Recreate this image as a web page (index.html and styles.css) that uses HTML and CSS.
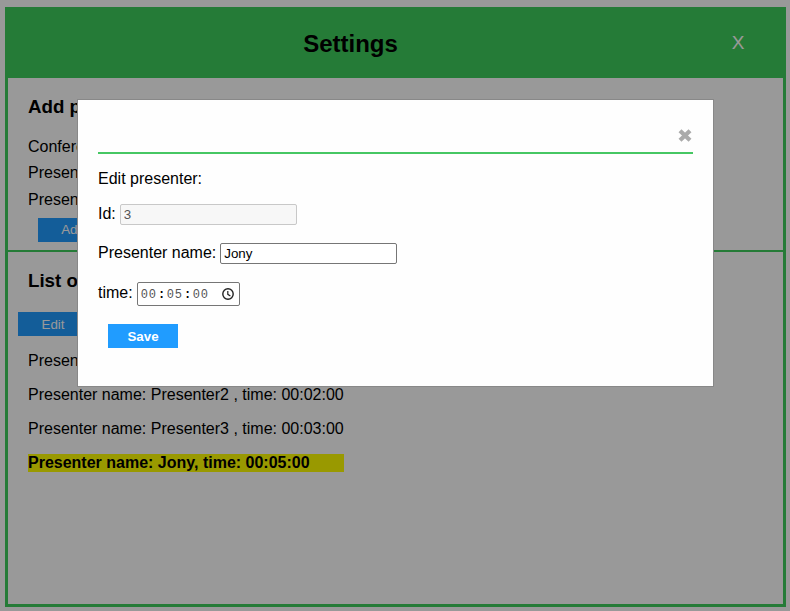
FILE: index.html
```html
<!DOCTYPE html>
<html lang="en">
<head>
<meta charset="utf-8">
<title>Settings</title>
<link rel="stylesheet" href="styles.css">
</head>
<body>
<main class="panel">
  <header class="header">
    <h1 class="title">Settings</h1>
    <button class="panel-close">X</button>
  </header>
  <section class="add">
    <h2>Add presenter:</h2>
    <p>Conference</p>
    <p>Presenter</p>
    <p>Presenter</p>
    <button class="btn btn-add">Add</button>
  </section>
  <section class="list">
    <h2>List of</h2>
    <button class="btn">Edit</button>
    <ul class="presenters">
      <li>Presenter</li>
      <li>Presenter name: Presenter2 , time: 00:02:00</li>
      <li>Presenter name: Presenter3 , time: 00:03:00</li>
      <li class="selected">Presenter name: Jony, time: 00:05:00</li>
    </ul>
  </section>
</main>
<div class="overlay">
  <div class="modal">
    <div class="modal-head"><button class="modal-close" aria-label="Close"><svg width="14" height="13" viewBox="0 0 14 13"><path d="M2 1.7L12 11.3M12 1.7L2 11.3" stroke="#aaa" stroke-width="4.2"/></svg></button></div>
    <p class="modal-title">Edit presenter:</p>
    <div class="row row-id"><label for="pid">Id:</label><input id="pid" value="3" disabled></div>
    <div class="row row-name"><label for="name">Presenter name:</label><input id="name" value="Jony"></div>
    <div class="row row-time"><span>time:</span>
      <div class="time"><span class="digits">00</span><b>:</b><span class="digits">05</span><b>:</b><span class="digits">00</span>
        <svg class="clock" width="12" height="12" viewBox="0 0 12 12" fill="none" stroke="#222"><circle cx="6" cy="6" r="5.2" stroke-width="1.4"/><path d="M5.8 3v3.3l2.6 1.6" stroke-width="1.2"/></svg>
      </div>
    </div>
    <button class="btn btn-save">Save</button>
  </div>
</div>
</body>
</html>
```
FILE: styles.css
```css
* { box-sizing: border-box; }

body {
  margin: 0;
  padding: 7px 4px 4px 5px;
  height: 611px;
  overflow: hidden;
  background: #fff;
  color: #000;
  font: 16px/18px "Liberation Sans", Arial, sans-serif;
}

h1, h2, p, ul { margin: 0; padding: 0; }
button { border: 0; padding: 0; font-family: inherit; }

.panel {
  height: 600px;
  border: 3px solid #3fcd5c;
}

.header {
  display: grid;
  grid-template-columns: 685px 90px;
  align-items: center;
  height: 68px;
  background: #3fcd5c;
}
.title { font-size: 24px; line-height: 28px; text-align: center; }
.panel-close {
  justify-self: center;
  margin-bottom: 2px;
  background: none;
  color: #fff;
  font-size: 19px;
  line-height: 22px;
}

h2 { font-size: 18.72px; line-height: 22px; }

.add {
  height: 174px;
  padding: 18px 20px 0;
  border-bottom: 2px solid #3fcd5c;
}
.add h2 { margin-bottom: 20px; }
.add p { margin-bottom: 8.4px; }

.btn {
  display: block;
  width: 70px;
  height: 24px;
  background: #209cff;
  color: #fff;
  font-size: 13.33px;
}
.btn-add { margin: 9.2px 0 0 10px; }

.list { padding: 18px 10px 0; }
.list h2 { margin: 0 0 20px 10px; }

.presenters {
  width: max-content;
  margin: 16px 0 0 10px;
  list-style: none;
}
.presenters li { margin-bottom: 16px; }
.selected { background: #ff0; font-weight: bold; }

.overlay {
  position: fixed;
  inset: 0;
  padding: 99px 76px 0 77px;
  background: rgba(0, 0, 0, .4);
}
.modal {
  height: 288px;
  padding: 20px;
  border: 1px solid #888;
  background: #fefefe;
}
.modal-head {
  display: flex;
  justify-content: flex-end;
  height: 34px;
  padding-top: 9px;
  border-bottom: 2px solid #46c763;
}
.modal-close { height: 13px; margin-right: 1px; background: none; }
.modal-close svg { display: block; }
.modal-title { margin-top: 16px; }

.row { display: flex; align-items: center; gap: 4px; }
.row-id { margin-top: 16px; }
.row-name { margin-top: 18px; }
.row-time { margin-top: 18px; }
.row label, .row > span { margin-bottom: 2px; }

input {
  width: 177px;
  height: 21px;
  padding: 1px 3px;
  border: 1px solid #767676;
  border-radius: 2px;
  background: #fff;
  font: 13.33px "Liberation Sans", Arial, sans-serif;
}
input:disabled { border-color: #c8c8c8; background: #f7f7f7; color: #545454; }

.time {
  display: flex;
  align-items: center;
  width: 103px;
  height: 24px;
  padding: 0 5px 0 3px;
  border: 1px solid #767676;
  border-radius: 2px;
  font: 13.33px/16px "Liberation Mono", monospace;
  background: #fff;
}
.time b { width: 10px; font-size: 12px; text-align: center; margin-top: 1px; }
.digits { width: 16px; margin-top: 2px; font-size: 12px; color: #555; letter-spacing: .8px; }
.clock { margin-left: auto; }
.btn-save { margin: 18px 0 0 10px; font-weight: bold; }
```
